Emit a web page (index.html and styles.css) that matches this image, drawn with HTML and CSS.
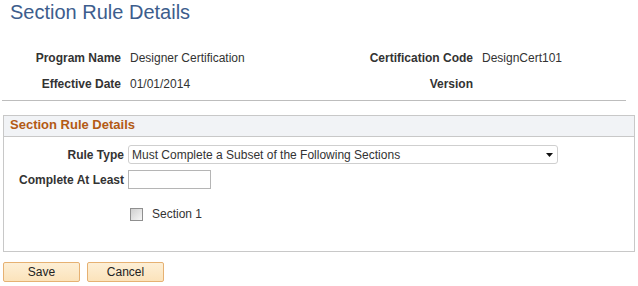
FILE: index.html
```html
<!DOCTYPE html>
<html lang="en">
<head>
  <meta charset="UTF-8" />
  <title>Section Rule Details</title>
  <link rel="stylesheet" href="styles.css">
</head>
<body>
  <h1 class="page-title">Section Rule Details</h1>

  <div class="summary">
    <span class="label">Program Name</span>
    <span class="value">Designer Certification</span>
    <span class="label">Certification Code</span>
    <span class="value">DesignCert101</span>

    <span class="label">Effective Date</span>
    <span class="value">01/01/2014</span>
    <span class="label">Version</span>
    <span class="value"></span>
  </div>

  <div class="group-box">
    <div class="group-header">Section Rule Details</div>
    <div class="group-body">
      <div class="form-row">
        <label class="label">Rule Type</label>
        <div class="select">
          <span>Must Complete a Subset of the Following Sections</span>
          <svg class="select-arrow" width="7" height="4" viewBox="0 0 7 4"><path d="M0 0h7L3.5 4z" fill="#111"/></svg>
        </div>
      </div>
      <div class="form-row">
        <label class="label">Complete At Least</label>
        <div class="text-input"></div>
      </div>
      <div class="form-row check-row">
        <span></span>
        <div class="check-item">
          <span class="checkbox"></span>
          <span class="check-text">Section 1</span>
        </div>
      </div>
    </div>
  </div>

  <div class="btn-group">
    <button>Save</button>
    <button>Cancel</button>
  </div>
</body>
</html>
```

FILE: styles.css
```css
:root {
  --text: #333;
  --title: #3d5d8d;
  --group-title: #b35a14;
  --border: #c8c8c8;
  --line: #bdbdbd;
}

body {
  margin: 0;
  font-family: "Liberation Sans", Arial, sans-serif;
  font-size: 12px;
  color: var(--text);
  background: #fff;
}

.page-title {
  margin: 0;
  padding-left: 10px;
  font-size: 20px;
  font-weight: normal;
  line-height: 24px;
  color: var(--title);
}

.summary {
  display: grid;
  grid-template-columns: 119px 220px 114px auto;
  grid-auto-rows: 26px;
  column-gap: 9px;
  align-items: center;
  margin: 21px 12px 0 2px;
  padding-bottom: 3px;
  border-bottom: 1px solid var(--line);
}

.label {
  text-align: right;
  font-weight: bold;
}

.group-box {
  margin: 14px 3px 0 3px;
  border: 1px solid var(--border);
}

.group-header {
  background: #f1f3f6;
  border-bottom: 1px solid var(--border);
  padding: 0 0 2px 6px;
  line-height: 18px;
  font-size: 13px;
  font-weight: bold;
  color: var(--group-title);
}

.group-body {
  padding: 8px 0 30px;
}

.form-row {
  display: grid;
  grid-template-columns: 120px auto;
  column-gap: 4px;
  align-items: center;
  margin-bottom: 6px;
}

.select {
  display: flex;
  align-items: center;
  justify-content: space-between;
  width: 430px;
  height: 19px;
  padding: 0 4px 0 3px;
  box-sizing: border-box;
  border: 1px solid #cfcfcf;
  border-radius: 3px;
}

.text-input {
  width: 81px;
  height: 17px;
  border: 1px solid #b5b5b5;
}

.check-row {
  margin: 18px 0 0;
}

.check-item {
  display: flex;
  align-items: center;
  gap: 9px;
  margin-left: 2px;
}

.checkbox {
  width: 11px;
  height: 11px;
  border: 1px solid #8f8f8f;
  background: linear-gradient(135deg, #cfcfcf, #f6f6f6);
}

.btn-group {
  display: flex;
  gap: 7px;
  margin: 10px 0 0 3px;
}

button {
  width: 77px;
  height: 20px;
  padding: 0;
  font-family: inherit;
  font-size: 12px;
  color: #222;
  background: linear-gradient(#fdefd6, #fbe3bb);
  border: 1px solid #e6b172;
  border-radius: 2px;
}
```
